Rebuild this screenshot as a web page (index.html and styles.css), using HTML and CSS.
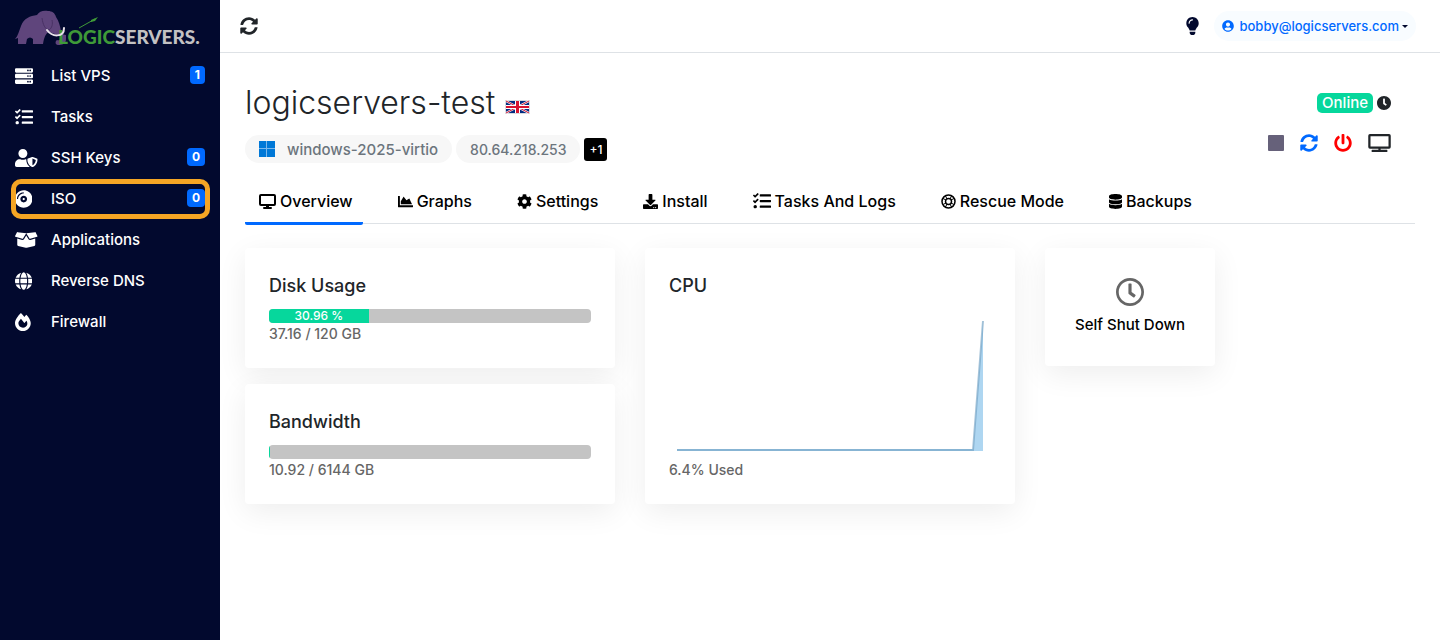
FILE: index.html
```html
<!DOCTYPE html>
<html lang="en">
<head>
  <meta charset="UTF-8">
  <meta name="viewport" content="width=device-width, initial-scale=1.0">
  <title>logicservers-test - Logic Servers</title>
  <link rel="stylesheet" href="styles.css">
</head>
<body>
  <!-- shared icons -->
  <svg class="sprite" aria-hidden="true">
    <symbol id="tasks" viewBox="0 0 512 512"><path d="M139.61 35.5a12 12 0 0 0-17 0L58.93 98.81l-22.7-22.12a12 12 0 0 0-17 0L3.53 92.41a12 12 0 0 0 0 17l47.59 47.4a12.78 12.78 0 0 0 17.61 0l15.59-15.62L156.52 69a12.09 12.09 0 0 0 .09-17zm0 159.19a12 12 0 0 0-17 0l-63.68 63.72-22.7-22.1a12 12 0 0 0-17 0L3.53 252a12 12 0 0 0 0 17L51 316.5a12.77 12.77 0 0 0 17.6 0l15.7-15.69 72.2-72.22a12 12 0 0 0 .09-16.9zM64 368c-26.49 0-48.59 21.5-48.59 48S37.53 464 64 464a48 48 0 0 0 0-96zm432 16H208a16 16 0 0 0-16 16v32a16 16 0 0 0 16 16h288a16 16 0 0 0 16-16v-32a16 16 0 0 0-16-16zm0-320H208a16 16 0 0 0-16 16v32a16 16 0 0 0 16 16h288a16 16 0 0 0 16-16V80a16 16 0 0 0-16-16zm0 160H208a16 16 0 0 0-16 16v32a16 16 0 0 0 16 16h288a16 16 0 0 0 16-16v-32a16 16 0 0 0-16-16z"/></symbol>
    <symbol id="sync" viewBox="0 0 512 512"><path d="M370.72 133.28C339.458 104.008 298.888 87.962 255.848 88c-77.458.068-144.328 53.178-162.791 126.85-1.344 5.363-6.122 9.15-11.651 9.15H24.103c-7.498 0-13.194-6.807-11.807-14.176C33.933 94.924 134.813 8 256 8c66.448 0 126.791 26.136 171.315 68.685L463.03 40.97C478.149 25.851 504 36.559 504 57.941V192c0 13.255-10.745 24-24 24H345.941c-21.382 0-32.09-25.851-16.971-40.971l41.75-41.749zM32 296h134.059c21.382 0 32.09 25.851 16.971 40.971l-41.75 41.75c31.262 29.273 71.835 45.319 114.876 45.28 77.418-.07 144.315-53.144 162.787-126.849 1.344-5.363 6.122-9.15 11.651-9.15h57.304c7.498 0 13.194 6.807 11.807 14.176C478.067 417.076 377.187 504 256 504c-66.448 0-126.791-26.136-171.315-68.685L48.97 471.03C33.851 486.149 8 475.441 8 454.059V320c0-13.255 10.745-24 24-24z"/></symbol>
  </svg>

  <div class="layout">
    <aside class="sidebar">
      <a class="logo" href="#" aria-label="Logic Servers">
        <svg width="190" height="38" viewBox="0 0 190 38">
          <path fill="#5f457c" d="M0 29c3-3 4-8 6-13C9 8 15 6 22 5c2-4 7-5 11-4 4 0 7 2 8 6 3 4 4 9 5 14 1 3 3 4 5 4v4c0 5-4 6-8 6-3 0-3-4-1-5 3 1 4-1 3-4-4-2-8-3-11-4-3 1-5 5-6 12H18v-5c-2-2-4-2-6 0l-1 5H3v-6z"/>
          <path fill="none" stroke="#483164" d="M27 8c1 7 3 11 7 12 3-2 4-6 3-10"/>
          <text class="logo-green" x="43" y="34">LOGIC</text>
          <text class="logo-grey" x="100" y="34">SERVERS.</text>
          <path fill="none" stroke="#3f9a38" d="M64 18 80 9"/>
          <path fill="#3f9a38" d="m76 10 7-3-3 4-4 1z"/>
          <path fill="none" stroke="#e8e3ea" stroke-width="2" stroke-linecap="round" d="M32 20c5 7 17 8 17-2"/>
        </svg>
      </a>
      <nav class="side-nav">
        <a href="#">
          <svg class="side-icon" viewBox="0 0 512 512"><path fill-rule="evenodd" d="M32 32h448a32 32 0 0 1 32 32v64a32 32 0 0 1-32 32H32a32 32 0 0 1-32-32V64a32 32 0 0 1 32-32zm400 40a24 24 0 1 0 0 48 24 24 0 0 0 0-48zm-64 0a24 24 0 1 0 0 48 24 24 0 0 0 0-48zM32 192h448a32 32 0 0 1 32 32v64a32 32 0 0 1-32 32H32a32 32 0 0 1-32-32v-64a32 32 0 0 1 32-32zm400 40a24 24 0 1 0 0 48 24 24 0 0 0 0-48zm-64 0a24 24 0 1 0 0 48 24 24 0 0 0 0-48zM32 352h448a32 32 0 0 1 32 32v64a32 32 0 0 1-32 32H32a32 32 0 0 1-32-32v-64a32 32 0 0 1 32-32zm400 40a24 24 0 1 0 0 48 24 24 0 0 0 0-48zm-64 0a24 24 0 1 0 0 48 24 24 0 0 0 0-48z"/></svg>
          <span>List VPS</span>
          <span class="count">1</span>
        </a>
        <a href="#">
          <svg class="side-icon" viewBox="0 0 18 18"><use href="#tasks" width="18" height="18"/></svg>
          <span>Tasks</span>
        </a>
        <a href="#">
          <svg class="side-icon" viewBox="0 0 640 512"><path d="M622.3 271.1l-115.2-45c-4.1-1.6-12.6-3.7-22.2 0l-115.2 45c-10.7 4.2-17.7 14-17.7 24.9 0 111.6 68.7 188.8 132.9 213.9 9.6 3.7 18 1.6 22.2 0C558.4 489.9 640 420.5 640 296c0-10.9-7-20.7-17.7-24.9zM496 462.4V273.3l95.5 37.3c-5.6 87.1-60.9 135.4-95.5 151.8zM224 256c70.7 0 128-57.3 128-128S294.7 0 224 0 96 57.3 96 128s57.3 128 128 128zm96 40c0-2.5.8-4.8 1.1-7.2-2.5-.1-4.9-.8-7.5-.8h-16.7c-22.2 10.2-46.9 16-72.9 16s-50.6-5.8-72.9-16h-16.7C60.2 288 0 348.2 0 422.4V464c0 26.5 21.5 48 48 48h352c6.8 0 13.3-1.5 19.2-4-54-42.9-99.2-116.7-99.2-212z"/></svg>
          <span>SSH Keys</span>
          <span class="count">0</span>
        </a>
        <a href="#" class="marked">
          <svg class="side-icon" viewBox="0 0 496 512" preserveAspectRatio="xMinYMid"><path d="M248 8C111 8 0 119 0 256s111 248 248 248 248-111 248-248S385 8 248 8zM88 256H56c0-105.9 86.1-192 192-192v32c-88.2 0-160 71.8-160 160zm160 96c-53 0-96-43-96-96s43-96 96-96 96 43 96 96-43 96-96 96zm0-128c-17.7 0-32 14.3-32 32s14.3 32 32 32 32-14.3 32-32-14.3-32-32-32z"/></svg>
          <span>ISO</span>
          <span class="count">0</span>
        </a>
        <a href="#">
          <svg class="side-icon" viewBox="0 0 640 512"><path d="M425.7 256c-16.9 0-32.8-9-41.4-23.4L320 126l-64.2 106.6c-8.7 14.5-24.6 23.5-41.5 23.5-4.5 0-9-.6-13.3-1.9L64 215v178c0 14.7 10 27.5 24.2 31l216.2 54.1c10.2 2.5 20.9 2.5 31 0L551.8 424c14.2-3.6 24.2-16.4 24.2-31V215l-137 39.1c-4.3 1.3-8.8 1.9-13.3 1.9zm212.6-112.2L586.8 41c-3.1-6.2-9.8-9.8-16.7-8.9L320 64l91.7 152.1c3.8 6.3 11.4 9.3 18.5 7.3l197.9-56.5c9.9-2.9 14.7-13.9 10.2-23.1zM53.2 41L1.7 143.8c-4.6 9.2.3 20.2 10.1 23l197.9 56.5c7.1 2 14.7-1 18.5-7.3L320 64 69.8 32.1c-6.9-.8-13.5 2.7-16.6 8.9z"/></svg>
          <span>Applications</span>
        </a>
        <a href="#">
          <svg class="side-icon" viewBox="0 0 496 512" preserveAspectRatio="xMinYMid"><path d="M336.5 160C322 70.7 287.8 8 248 8s-74 62.7-88.5 152h177zM152 256c0 22.2 1.2 43.5 3.3 64h185.3c2.1-20.5 3.3-41.8 3.3-64s-1.2-43.5-3.3-64H155.3c-2.1 20.5-3.3 41.8-3.3 64zm324.7-96c-28.6-67.9-86.5-120.4-158-141.6 24.4 33.8 41.2 84.7 50 141.6h108zM177.2 18.4C105.8 39.6 47.8 92.1 19.3 160h108c8.7-56.9 25.5-107.8 49.9-141.6zM487.4 192H372.7c2.1 21 3.3 42.5 3.3 64s-1.2 43-3.3 64h114.6c5.5-20.5 8.6-41.8 8.6-64s-3.1-43.5-8.5-64zM120 256c0-21.5 1.2-43 3.3-64H8.6C3.2 212.5 0 233.8 0 256s3.2 43.5 8.6 64h114.6c-2-21-3.2-42.5-3.2-64zm39.5 96c14.5 89.3 48.7 152 88.5 152s74-62.7 88.5-152h-177zm159.3 141.6c71.4-21.2 129.4-73.7 158-141.6h-108c-8.8 56.9-25.6 107.8-50 141.6zM19.3 352c28.6 67.9 86.5 120.4 158 141.6-24.4-33.8-41.2-84.7-50-141.6h-108z"/></svg>
          <span>Reverse DNS</span>
        </a>
        <a href="#">
          <svg class="side-icon" viewBox="0 0 448 512" preserveAspectRatio="xMinYMid"><path d="M323.56 51.2c-20.8 19.3-39.58 39.59-56.22 59.97C240.08 73.62 206.28 35.53 168 0 69.74 91.17 0 209.96 0 281.6 0 408.85 100.29 512 224 512s224-103.15 224-230.4c0-53.27-51.98-163.14-124.44-230.4zm-19.47 340.65C282.43 407.01 255.72 416 226.86 416 154.71 416 96 368.26 96 290.75c0-38.61 24.31-72.63 72.79-130.75 6.93 7.98 98.83 125.34 98.83 125.34l58.63-66.88c4.14 6.85 7.91 13.55 11.27 19.97 27.35 52.19 15.81 118.97-33.43 153.42z"/></svg>
          <span>Firewall</span>
        </a>
      </nav>
    </aside>

    <div class="page">
      <header class="topbar">
        <button class="icon-btn" aria-label="Refresh">
          <svg width="18" height="18"><use href="#sync"/></svg>
        </button>
        <div class="topbar-right">
          <button class="icon-btn night" aria-label="Toggle theme">
            <svg width="13" height="18" viewBox="0 0 352 512"><path d="M96.06 454.35c.01 6.29 1.87 12.45 5.36 17.69l17.09 25.69a31.99 31.99 0 0 0 26.64 14.28h61.71a31.99 31.99 0 0 0 26.64-14.28l17.09-25.69a31.989 31.989 0 0 0 5.36-17.69l.04-38.35H96.01l.05 38.35zM0 176c0 44.37 16.45 84.85 43.56 115.78 16.52 18.85 42.36 58.23 52.21 91.45.04.26.07.52.11.78h160.24c.04-.26.07-.51.11-.78 9.85-33.22 35.69-72.6 52.21-91.45C335.55 260.85 352 220.37 352 176 352 78.61 272.91-.3 175.45 0 73.44.31 0 82.97 0 176zm176-80c-44.11 0-80 35.89-80 80 0 8.84-7.16 16-16 16s-16-7.16-16-16c0-61.76 50.24-112 112-112 8.84 0 16 7.16 16 16s-7.16 16-16 16z"/></svg>
          </button>
          <button class="user">
            <svg width="12" height="12" viewBox="0 0 496 512"><path d="M248 8C111 8 0 119 0 256s111 248 248 248 248-111 248-248S385 8 248 8zm0 96c48.6 0 88 39.4 88 88s-39.4 88-88 88-88-39.4-88-88 39.4-88 88-88zm0 344c-58.7 0-111.3-26.6-146.5-68.2 18.8-35.4 55.6-59.8 98.5-59.8 2.4 0 4.8.4 7.1 1.1 13 4.2 26.6 6.9 40.9 6.9 14.3 0 28-2.7 40.9-6.9 2.3-.7 4.7-1.1 7.1-1.1 42.9 0 79.7 24.4 98.5 59.8C359.3 421.4 306.7 448 248 448z"/></svg>
            <span>bobby@logicservers.com</span>
            <i class="caret"></i>
          </button>
        </div>
      </header>

      <main class="content">
        <section class="server-head">
          <div>
            <h1>
              logicservers-test
              <svg class="flag" width="25" height="14" viewBox="0 0 25 14">
                <path fill="#d8dade" d="M0 0h25v14H0z"/>
                <path fill="#012a80" d="M1 1h23v12H1z"/>
                <path stroke="#fff" stroke-width="2" d="m1 1 23 12M24 1 1 13"/>
                <path stroke="#c8102e" d="m1 1 23 12M24 1 1 13"/>
                <path stroke="#fff" stroke-width="5" d="M12.500 1v12"/>
                <path stroke="#fff" stroke-width="4" d="M1 7h23"/>
                <path stroke="#d8122f" stroke-width="3" d="M12.500 1v12"/>
                <path stroke="#d8122f" stroke-width="2" d="M1 7h23"/>
              </svg>
            </h1>
            <div class="tags">
              <span class="tag tag-os">
                <svg width="16" height="16" viewBox="0 0 16 16"><path fill="#7cb8ec" d="M0 0h16v16H0z"/><path fill="#0078d7" d="M0 0h7v7H0zM8 0h8v7H8zM0 8h7v8H0zM8 8h8v8H8z"/></svg>
                windows-2025-virtio
              </span>
              <span class="tag">80.64.218.253</span>
              <button class="more">+1</button>
            </div>
          </div>
          <div class="server-state">
            <div class="status">
              <span class="online">Online</span>
              <svg width="14" height="14" viewBox="8 8 496 496"><path d="M256,8C119,8,8,119,8,256S119,504,256,504,504,393,504,256,393,8,256,8Zm92.49,313h0l-20,25a16,16,0,0,1-22.49,2.5h0l-67-49.72a40,40,0,0,1-15-31.23V112a16,16,0,0,1,16-16h32a16,16,0,0,1,16,16V256l58,42.5A16,16,0,0,1,348.49,321Z"/></svg>
            </div>
            <div class="actions">
              <button class="icon-btn stop" aria-label="Stop"><svg width="16" height="16" viewBox="0 0 16 16"><rect width="16" height="16" rx="1"/></svg></button>
              <button class="icon-btn restart" aria-label="Restart"><svg width="18" height="18"><use href="#sync"/></svg></button>
              <button class="icon-btn power" aria-label="Power off"><svg width="18" height="18" viewBox="0 0 512 512"><path d="M400 54.1c63 45 104 118.6 104 201.9 0 136.8-110.8 247.7-247.5 248C120 504.3 8.2 393 8 256.4 7.9 173.1 48.9 99.3 111.8 54.2c11.7-8.3 28-4.8 35 7.7L162.6 90c5.9 10.5 3.1 23.8-6.6 31-41.5 30.8-68 79.6-68 134.9-.1 92.3 74.5 168.1 168 168.1 91.6 0 168.6-74.2 168-169.1-.3-51.8-24.7-101.8-68.1-134-9.7-7.2-12.4-20.5-6.5-30.9l15.8-28.1c7-12.4 23.2-16.1 34.8-7.8zM296 264V24c0-13.3-10.7-24-24-24h-32c-13.3 0-24 10.7-24 24v240c0 13.3 10.7 24 24 24h32c13.3 0 24-10.7 24-24z"/></svg></button>
              <button class="icon-btn" aria-label="Console"><svg width="23" height="18" viewBox="0 0 640 512"><path d="M592 0H48A48 48 0 0 0 0 48v320a48 48 0 0 0 48 48h240v32H112a16 16 0 0 0-16 16v32a16 16 0 0 0 16 16h416a16 16 0 0 0 16-16v-32a16 16 0 0 0-16-16H352v-32h240a48 48 0 0 0 48-48V48a48 48 0 0 0-48-48zm-16 352H64V64h512z"/></svg></button>
            </div>
          </div>
        </section>

        <nav class="tabs">
          <a href="#" class="active">
            <svg width="17" height="15" viewBox="0 0 17 15"><path fill-rule="evenodd" d="M2 0h13a2 2 0 0 1 2 2v8a2 2 0 0 1-2 2h-5v1h2a1 1 0 0 1 0 2H5a1 1 0 0 1 0-2h2v-1H2a2 2 0 0 1-2-2V2a2 2 0 0 1 2-2zm0 2v8h13V2z"/></svg>
            Overview
          </a>
          <a href="#">
            <svg width="15" height="15" viewBox="0 0 512 512"><path d="M500 384c6.6 0 12 5.4 12 12v40c0 6.6-5.4 12-12 12H12c-6.6 0-12-5.4-12-12V76c0-6.6 5.4-12 12-12h40c6.6 0 12 5.4 12 12v308h436zM372.7 159.5L288 216l-85.3-113.7c-5.1-6.8-15.5-6.3-19.9 1L96 248v104h384l-89.9-187.8c-3.2-6.5-11.4-8.7-17.4-4.7z"/></svg>
            Graphs
          </a>
          <a href="#">
            <svg width="15" height="15" viewBox="0 0 512 512"><path d="M487.4 315.7l-42.6-24.6c4.3-23.2 4.3-47 0-70.2l42.6-24.6c4.9-2.8 7.1-8.6 5.5-14-11.1-35.6-30-67.8-54.7-94.6-3.8-4.1-10-5.1-14.8-2.3L380.8 110c-17.9-15.4-38.5-27.3-60.8-35.1V25.8c0-5.6-3.9-10.5-9.4-11.7-36.7-8.2-74.3-7.8-109.2 0-5.5 1.2-9.4 6.1-9.4 11.7V75c-22.2 7.9-42.8 19.8-60.8 35.1L88.7 85.5c-4.9-2.8-11-1.9-14.8 2.3-24.7 26.7-43.6 58.9-54.7 94.6-1.7 5.4.6 11.2 5.5 14L67.3 221c-4.3 23.2-4.3 47 0 70.2l-42.6 24.6c-4.9 2.8-7.1 8.6-5.5 14 11.1 35.6 30 67.8 54.7 94.6 3.8 4.1 10 5.1 14.8 2.3l42.6-24.6c17.9 15.4 38.5 27.3 60.8 35.1v49.2c0 5.6 3.9 10.5 9.4 11.7 36.7 8.2 74.3 7.8 109.2 0 5.5-1.2 9.4-6.1 9.4-11.7v-49.2c22.2-7.9 42.8-19.8 60.8-35.1l42.6 24.6c4.9 2.8 11 1.9 14.8-2.3 24.7-26.7 43.6-58.9 54.7-94.6 1.5-5.5-.7-11.3-5.6-14.1zM256 336c-44.1 0-80-35.9-80-80s35.9-80 80-80 80 35.9 80 80-35.9 80-80 80z"/></svg>
            Settings
          </a>
          <a href="#">
            <svg width="15" height="15" viewBox="0 0 512 512"><path d="M216 0h80c13.3 0 24 10.7 24 24v168h87.7c17.8 0 26.7 21.5 14.1 34.1L269.7 378.3c-7.5 7.5-19.8 7.5-27.3 0L90.1 226.1c-12.6-12.6-3.7-34.1 14.1-34.1H192V24c0-13.3 10.7-24 24-24zm296 376v112c0 13.3-10.7 24-24 24H24c-13.3 0-24-10.7-24-24V376c0-13.3 10.7-24 24-24h146.7l49 49c20.1 20.1 52.5 20.1 72.6 0l49-49H488c13.3 0 24 10.7 24 24zm-124 88c0-11-9-20-20-20s-20 9-20 20 9 20 20 20 20-9 20-20zm64 0c0-11-9-20-20-20s-20 9-20 20 9 20 20 20 20-9 20-20z"/></svg>
            Install
          </a>
          <a href="#">
            <svg width="18" height="18"><use href="#tasks"/></svg>
            Tasks And Logs
          </a>
          <a href="#">
            <svg width="15" height="15" viewBox="0 0 30 30"><g fill="none" stroke="currentColor"><circle cx="15" cy="15" r="13" stroke-width="3"/><circle cx="15" cy="15" r="6" stroke-width="3"/><path stroke-width="2" d="m4 9 6 3M9 4l3 6m14-1-6 3m1-8-3 6M4 21l6-3M9 26l3-6m14 1-6-3m1 8-3-6"/></g></svg>
            Rescue Mode
          </a>
          <a href="#">
            <svg width="13" height="15" viewBox="0 0 448 512"><path d="M448 73.143v45.714C448 159.143 347.667 192 224 192S0 159.143 0 118.857V73.143C0 32.857 100.333 0 224 0s224 32.857 224 73.143zM448 176v102.857C448 319.143 347.667 352 224 352S0 319.143 0 278.857V176c48.125 33.143 136.208 48.572 224 48.572S399.874 209.143 448 176zm0 160v102.857C448 479.143 347.667 512 224 512S0 479.143 0 438.857V336c48.125 33.143 136.208 48.572 224 48.572S399.874 369.143 448 336z"/></svg>
            Backups
          </a>
        </nav>

        <section class="cards">
          <div class="usage">
            <div class="card">
              <h2>Disk Usage</h2>
              <div class="progress"><div class="progress-bar" style="width: 30.96%">30.96 %</div></div>
              <p>37.16 / 120 GB</p>
            </div>
            <div class="card">
              <h2>Bandwidth</h2>
              <div class="progress"><div class="progress-bar" style="width: 0.18%"></div></div>
              <p>10.92 / 6144 GB</p>
            </div>
          </div>
          <div class="card cpu">
            <h2>CPU</h2>
            <svg class="chart" viewBox="0 0 322 160">
              <path fill="#aed6f1" d="M8 150h296l10-128v130H8z"/>
              <path fill="none" stroke="#6c9cc0" stroke-opacity=".6" stroke-width="2" d="M8 151h296l10-129"/>
            </svg>
            <p>6.4% Used</p>
          </div>
          <button class="card shutdown">
            <svg width="28" height="28" viewBox="8 8 496 496"><path d="M256 8C119 8 8 119 8 256s111 248 248 248 248-111 248-248S393 8 256 8zm0 448c-110.5 0-200-89.5-200-200S145.5 56 256 56s200 89.5 200 200-89.5 200-200 200zm61.8-104.4l-84.9-61.7c-3.1-2.3-4.9-5.9-4.9-9.7V116c0-6.6 5.4-12 12-12h32c6.6 0 12 5.4 12 12v141.7l66.8 48.6c5.4 3.9 6.5 11.4 2.6 16.8L334.6 349c-3.9 5.3-11.4 6.5-16.8 2.6z"/></svg>
            Self Shut Down
          </button>
        </section>
      </main>
    </div>
  </div>
</body>
</html>
```
FILE: styles.css
```css
* {
  box-sizing: border-box;
}
body {
  margin: 0;
  font-family: Inter, "Open Sans", sans-serif;
  font-size: 14px;
  line-height: 21px;
  font-weight: 500;
  color: #212529;
  background-color: #fff;
}
svg {
  display: block;
  fill: currentColor;
  flex-shrink: 0;
}
a {
  color: inherit;
  text-decoration: none;
}
button {
  font: inherit;
  border: 0;
  cursor: pointer;
}
h1, h2, p {
  margin: 0;
}
.sprite {
  position: absolute;
  width: 0;
  height: 0;
}
.layout {
  display: flex;
  min-height: 100vh;
}

/* sidebar */
.sidebar {
  width: 220px;
  flex-shrink: 0;
  background-color: #02092e;
  color: #fff;
}
.logo {
  display: block;
  height: 55px;
  padding: 10px 15px 0;
}
.logo text {
  font-family: Lato, sans-serif;
  font-size: 19px;
  font-weight: 900;
}
.logo-green {
  fill: #3f9a38;
}
.logo-grey {
  fill: #c3c1c3;
}
.side-nav a {
  position: relative;
  display: grid;
  grid-template-columns: 36px 1fr auto;
  align-items: center;
  height: 41px;
  padding: 0 15px;
  font-size: 15px;
}
.side-icon {
  height: 18px;
  margin-top: 1px;
}
.count {
  min-width: 14px;
  margin-bottom: 2px;
  padding: 0 5px;
  border-radius: 4px;
  background-color: #0069ff;
  font-size: 12px;
  font-weight: 700;
  line-height: 18px;
  text-align: center;
}
.marked::after {
  content: "";
  position: absolute;
  inset: 1px 10px 0 11px;
  border: 5px solid #f5a524;
  border-radius: 10px;
}

/* topbar */
.page {
  flex: 1;
  min-width: 0;
}
.topbar {
  display: flex;
  align-items: center;
  justify-content: space-between;
  height: 53px;
  padding: 0 24px 0 20px;
  border-bottom: 1px solid #dee2e6;
}
.topbar-right {
  display: flex;
  align-items: center;
  gap: 15px;
}
.icon-btn {
  padding: 0;
  background: none;
  color: #212529;
}
.night {
  color: #02092e;
}
.user {
  display: flex;
  align-items: center;
  gap: 5px;
  height: 30px;
  padding: 0 8px;
  border-radius: 15px;
  background-color: #f8fcff;
  color: #0069ff;
  font-size: 13px;
}
.caret {
  margin-left: -2px;
  border: 3px solid transparent;
  border-top-color: #02092e;
  border-bottom: 0;
}

/* server title */
.content {
  padding: 29px 25px;
}
.server-head {
  display: flex;
  justify-content: space-between;
}
h1 {
  display: flex;
  align-items: center;
  gap: 10px;
  font-size: 32px;
  font-weight: 300;
  line-height: 42px;
}
.flag {
  margin-top: 8px;
}
.tags {
  display: flex;
  align-items: center;
  gap: 4px;
  margin-top: 11px;
}
.tag {
  display: flex;
  align-items: center;
  gap: 12px;
  height: 28px;
  padding: 0 14px;
  border-radius: 14px;
  background-color: #f7f7f7;
  color: #6c757d;
}
.tag-os {
  font-size: 15px;
}
.more {
  padding: 0 5px;
  border-radius: 3px;
  background-color: #000;
  color: #fff;
  font-size: 12px;
  line-height: 23px;
}
.server-state {
  padding: 11px 24px 0 0;
}
.status, .actions {
  display: flex;
  align-items: center;
  justify-content: flex-end;
}
.status {
  gap: 4px;
}
.online {
  padding: 0 5px;
  border-radius: 5px;
  background-color: #06d79c;
  color: #fff;
  font-size: 15px;
  line-height: 20px;
}
.actions {
  gap: 16px;
  margin-top: 21px;
}
.stop {
  color: #66617a;
}
.restart {
  color: #0069ff;
}
.power {
  color: #f00;
}

/* tabs */
.tabs {
  display: flex;
  gap: 21px;
  margin-top: 17px;
  border-bottom: 1px solid #dee2e6;
}
.tabs a {
  display: flex;
  align-items: center;
  gap: 4px;
  height: 45px;
  margin-bottom: -2px;
  padding: 0 10px 0 14px;
  border-bottom: 3px solid transparent;
  border-radius: 2px;
  color: #000;
  font-size: 16px;
}
.tabs .active {
  border-color: #0069ff;
}

/* cards */
.cards {
  display: grid;
  grid-template-columns: repeat(12, 1fr);
  align-items: start;
  gap: 30px;
  margin-top: 24px;
}
.usage, .cpu {
  grid-column: span 4;
}
.usage {
  display: flex;
  flex-direction: column;
  gap: 16px;
}
.card {
  padding: 24px;
  border-radius: 4px;
  background-color: #fff;
  box-shadow: 0 8px 30px rgba(0, 0, 0, 0.07);
}
h2 {
  font-size: 18px;
  font-weight: 500;
  line-height: 27px;
}
.card p {
  color: #666;
}
.progress {
  margin-top: 10px;
  border-radius: 4px;
  overflow: hidden;
  background-color: #c4c4c4;
}
.progress-bar {
  height: 14px;
  background-color: #06d79c;
  color: #fff;
  font-size: 12px;
  line-height: 14px;
  text-align: center;
}
.chart {
  width: 100%;
}
.shutdown {
  grid-column: span 2;
  display: flex;
  flex-direction: column;
  align-items: center;
  gap: 8px;
  padding: 30px 8px;
  color: #000;
  font-size: 15px;
  line-height: 22px;
}
.shutdown svg {
  color: #666;
}
```
